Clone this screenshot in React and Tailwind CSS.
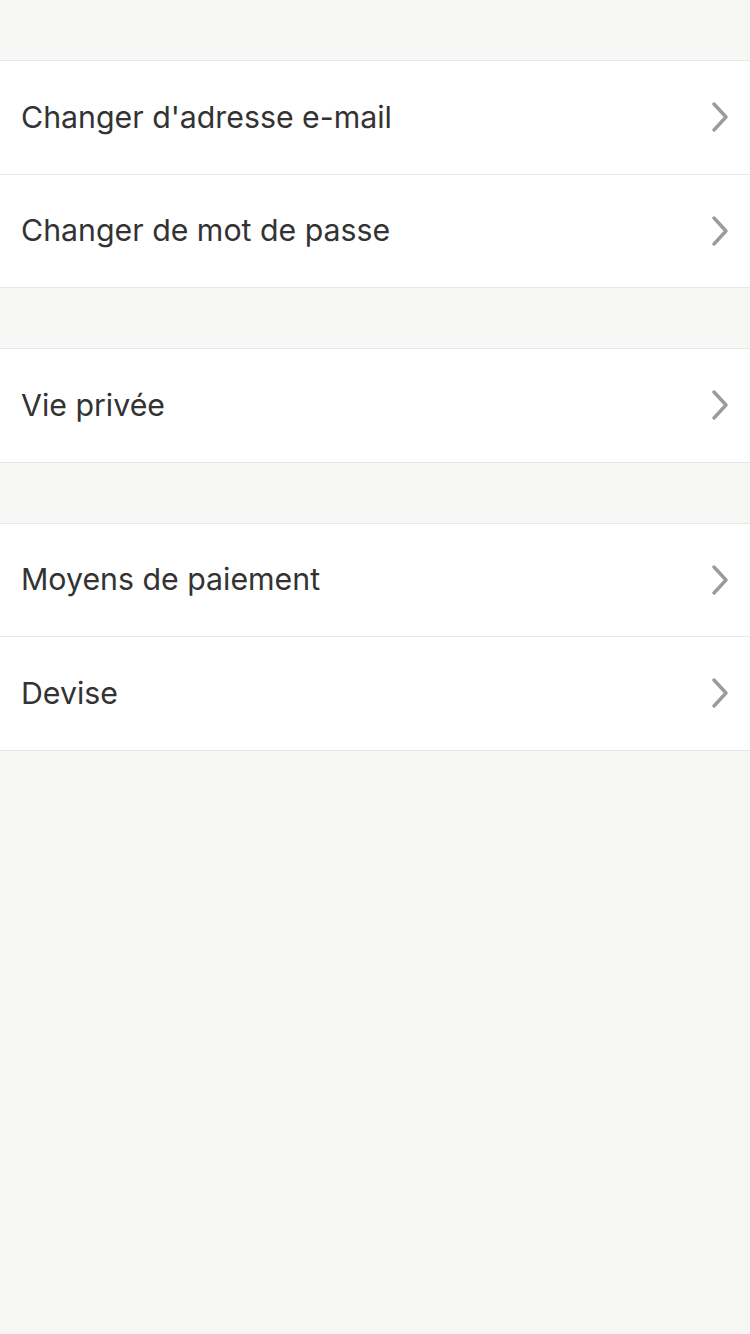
import React from 'react';

const groups = [
    ['Changer d\'adresse e-mail', 'Changer de mot de passe'],
    ['Vie privée'],
    ['Moyens de paiement', 'Devise'],
];

const Chevron = () => (
    <svg width="18" height="30" viewBox="0 0 18 30" fill="none" className="shrink-0">
        <path d="M3 2 L15 15 L3 28" stroke="#9b9b9b" strokeWidth="3.4" strokeLinecap="round" strokeLinejoin="round" />
    </svg>
);

const Row = ({ label, last }) => (
    <div className={`box-content flex items-center justify-between h-[112.5px] pl-[21px] pr-[21px] bg-white ${last ? '' : 'border-b border-[#e6e6e6]'}`}>
        <span className="text-[30.3px] text-[#333333]">{label}</span>
        <Chevron />
    </div>
);

export default function App() {
    return (
        <div
            className="min-h-[1334px] bg-[#f7f7f5] pt-[60px] flex flex-col gap-[60px]"
            style={{ fontFamily: 'Inter, "Noto Sans", sans-serif' }}
        >
            {groups.map((items, i) => (
                <div key={i} className="border-y border-[#e6e6e6]">
                    {items.map((label, j) => (
                        <Row key={label} label={label} last={j === items.length - 1} />
                    ))}
                </div>
            ))}
        </div>
    );
}
